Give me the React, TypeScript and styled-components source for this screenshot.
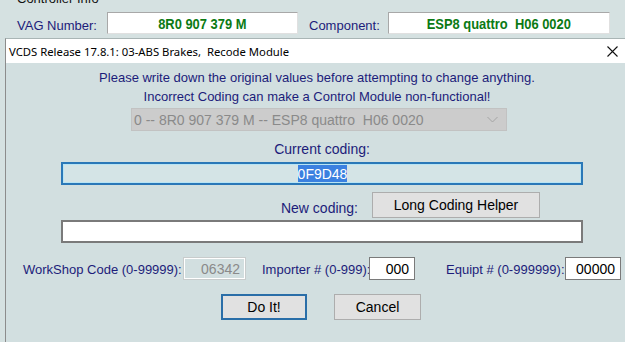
import styled, { createGlobalStyle } from "styled-components";

const GlobalStyle = createGlobalStyle`
  html, body {
    margin: 0;
    padding: 0;
    background: #d5e1e1;
    overflow: hidden;
  }
  body {
    width: 625px;
    height: 342px;
    font-family: "Liberation Sans", Arial, sans-serif;
  }
`;

const navy = "#1c1c7a";

const Page = styled.div`
  width: 625px;
  height: 342px;
  display: flex;
  flex-direction: column;
`;

const InfoGroup = styled.div`
  height: 38px;
  padding-left: 17px;
  display: flex;
  flex-direction: column;
`;

const GroupTitle = styled.div`
  font-size: 13px;
  color: #111;
  margin-top: -9px;
  height: 14px;
  white-space: nowrap;
`;

const InfoRow = styled.div`
  display: flex;
  align-items: center;
  margin-top: 7px;
`;

const InfoLabel = styled.span<{ $w: number }>`
  flex-shrink: 0;
  white-space: nowrap;
  font-size: 13px;
  color: ${navy};
  width: ${(p) => p.$w}px;
  padding-top: 4px;
`;

const InfoField = styled.div<{ $w: number }>`
  flex-shrink: 0;
  width: ${(p) => p.$w}px;
  height: 22px;
  box-sizing: border-box;
  background: #fff;
  border-top: 1px solid #a8a8a8;
  border-left: 1px solid #a8a8a8;
  border-right: 1px solid #e0e0e0;
  border-bottom: 1px solid #e0e0e0;
  display: flex;
  align-items: center;
  justify-content: center;
  margin-right: 11px;
`;

const GreenValue = styled.span`
  display: inline-block;
  font-weight: bold;
  font-size: 15px;
  color: #0b7a14;
  white-space: pre;
  transform: scaleX(0.86);
`;

const Dialog = styled.div`
  margin-left: 5px;
  flex: 1;
  border-left: 1px solid #8c8c8c;
  border-top: 1px solid #a9b5b5;
  display: flex;
  flex-direction: column;
`;

const TitleBar = styled.div`
  height: 24px;
  background: #fff;
  display: flex;
  align-items: center;
  justify-content: space-between;
  padding: 0 7px 0 3px;
  font-family: "Noto Sans", "Liberation Sans", sans-serif;
  font-size: 11.3px;
  color: #000;
  white-space: nowrap;
`;

const Body = styled.div`
  flex: 1;
  background: #d2dfe0;
  display: flex;
  flex-direction: column;
  padding-left: 55px;
`;

const Notice = styled.div`
  width: 522px;
  text-align: center;
  font-size: 13px;
  line-height: 19px;
  color: ${navy};
  margin-top: 5px;
  margin-left: -5px;
  white-space: nowrap;
`;

const Select = styled.div`
  margin: 2px 0 0 70px;
  width: 376px;
  height: 23px;
  box-sizing: border-box;
  background: #cccccc;
  border: 1px solid #c2c2c2;
  display: flex;
  align-items: center;
  justify-content: space-between;
  padding: 0 8px 0 2px;
  font-size: 14px;
  color: #8a8a8a;
  white-space: pre;
`;

const Caption = styled.div`
  width: 522px;
  text-align: center;
  font-size: 14px;
  color: ${navy};
  margin-top: 10px;
  line-height: 17px;
`;

const CodingField = styled.div<{ $current?: boolean }>`
  width: 522px;
  height: 23px;
  box-sizing: border-box;
  background: ${(p) => (p.$current ? "#d4e4e6" : "#fff")};
  border: 2px solid ${(p) => (p.$current ? "#2a78b8" : "#7a7a7a")};
  ${(p) => (p.$current ? "outline: 1px solid #b8e4f4; outline-offset: -3px; margin-top: 4px;" : "")}
  display: flex;
  align-items: center;
  justify-content: center;
  font-size: 14px;
`;

const Selected = styled.span`
  background: #3b80e0;
  color: #fff;
  padding: 1px 0;
  margin-left: 1px;
`;

const NewRow = styled.div`
  display: flex;
  align-items: center;
  gap: 14px;
  margin-top: 7px;
  height: 26px;
  margin-bottom: 2px;
`;

const NewLabel = styled.span`
  width: 297px;
  text-align: right;
  font-size: 14px;
  color: ${navy};
  padding-top: 6px;
`;

const Button = styled.div<{ $w: number; $default?: boolean }>`
  width: ${(p) => p.$w}px;
  height: 26px;
  box-sizing: border-box;
  background: #e1e1e1;
  border: ${(p) => (p.$default ? "2px solid #2a6ea8" : "1px solid #adadad")};
  display: flex;
  align-items: center;
  justify-content: center;
  font-size: 14px;
  color: #000;
`;

const CodeRow = styled.div`
  display: flex;
  align-items: center;
  margin: 14px 0 0 -38px;
  height: 23px;
`;

const CodeLabel = styled.span<{ $w: number }>`
  flex-shrink: 0;
  white-space: nowrap;
  width: ${(p) => p.$w}px;
  font-size: 13px;
  color: ${navy};
  padding-top: 2px;
`;

const CodeField = styled.div<{ $w: number; $gap?: number; $disabled?: boolean }>`
  flex-shrink: 0;
  width: ${(p) => p.$w}px;
  height: 23px;
  box-sizing: border-box;
  background: ${(p) => (p.$disabled ? "#d2dfe0" : "#fff")};
  border: 1px solid ${(p) => (p.$disabled ? "#c8cccc" : "#7a7a7a")};
  ${(p) => (p.$disabled ? "box-shadow: inset 0 0 0 1px #fff;" : "")}
  display: flex;
  align-items: center;
  justify-content: flex-end;
  padding-right: 5px;
  font-size: 14px;
  color: ${(p) => (p.$disabled ? "#8a8a8a" : "#000")};
  margin-right: ${(p) => p.$gap ?? 0}px;
`;

const Actions = styled.div`
  display: flex;
  gap: 27px;
  margin: 14px 0 0 160px;
`;

const CloseIcon = () => (
  <svg width="11" height="11" viewBox="0 0 11 11">
    <path d="M0.5 0.5 L10.5 10.5 M10.5 0.5 L0.5 10.5" stroke="#111" strokeWidth="1.1" />
  </svg>
);

const Chevron = () => (
  <svg width="11" height="7" viewBox="0 0 11 7">
    <path d="M0.5 1 L5.5 6 L10.5 1" stroke="#a4a4a4" fill="none" strokeWidth="1" />
  </svg>
);

export default function App() {
  return (
    <Page>
      <GlobalStyle />
      <InfoGroup>
        <GroupTitle>Controller Info</GroupTitle>
        <InfoRow>
          <InfoLabel $w={90}>VAG Number:</InfoLabel>
          <InfoField $w={191}>
            <GreenValue>8R0 907 379 M</GreenValue>
          </InfoField>
          <InfoLabel $w={79}>Component:</InfoLabel>
          <InfoField $w={222}>
            <GreenValue>ESP8 quattro  H06 0020</GreenValue>
          </InfoField>
        </InfoRow>
      </InfoGroup>
      <Dialog>
        <TitleBar>
          <span>VCDS Release 17.8.1: 03-ABS Brakes,&nbsp; Recode Module</span>
          <CloseIcon />
        </TitleBar>
        <Body>
          <Notice>
            Please write down the original values before attempting to change anything.
            <br />
            Incorrect Coding can make a Control Module non-functional!
          </Notice>
          <Select>
            <span>0 -- 8R0 907 379 M -- ESP8 quattro  H06 0020</span>
            <Chevron />
          </Select>
          <Caption>Current coding:</Caption>
          <CodingField $current>
            <Selected>0F9D48</Selected>
          </CodingField>
          <NewRow>
            <NewLabel>New coding:</NewLabel>
            <Button $w={168}>Long Coding Helper</Button>
          </NewRow>
          <CodingField />
          <CodeRow>
            <CodeLabel $w={160}>WorkShop Code (0-99999):</CodeLabel>
            <CodeField $w={63} $gap={16} $disabled>06342</CodeField>
            <CodeLabel $w={107}>Importer # (0-999):</CodeLabel>
            <CodeField $w={46} $gap={31}>000</CodeField>
            <CodeLabel $w={119}>Equipt # (0-999999):</CodeLabel>
            <CodeField $w={56}>00000</CodeField>
          </CodeRow>
          <Actions>
            <Button $w={86} $default>Do It!</Button>
            <Button $w={87}>Cancel</Button>
          </Actions>
        </Body>
      </Dialog>
    </Page>
  );
}
